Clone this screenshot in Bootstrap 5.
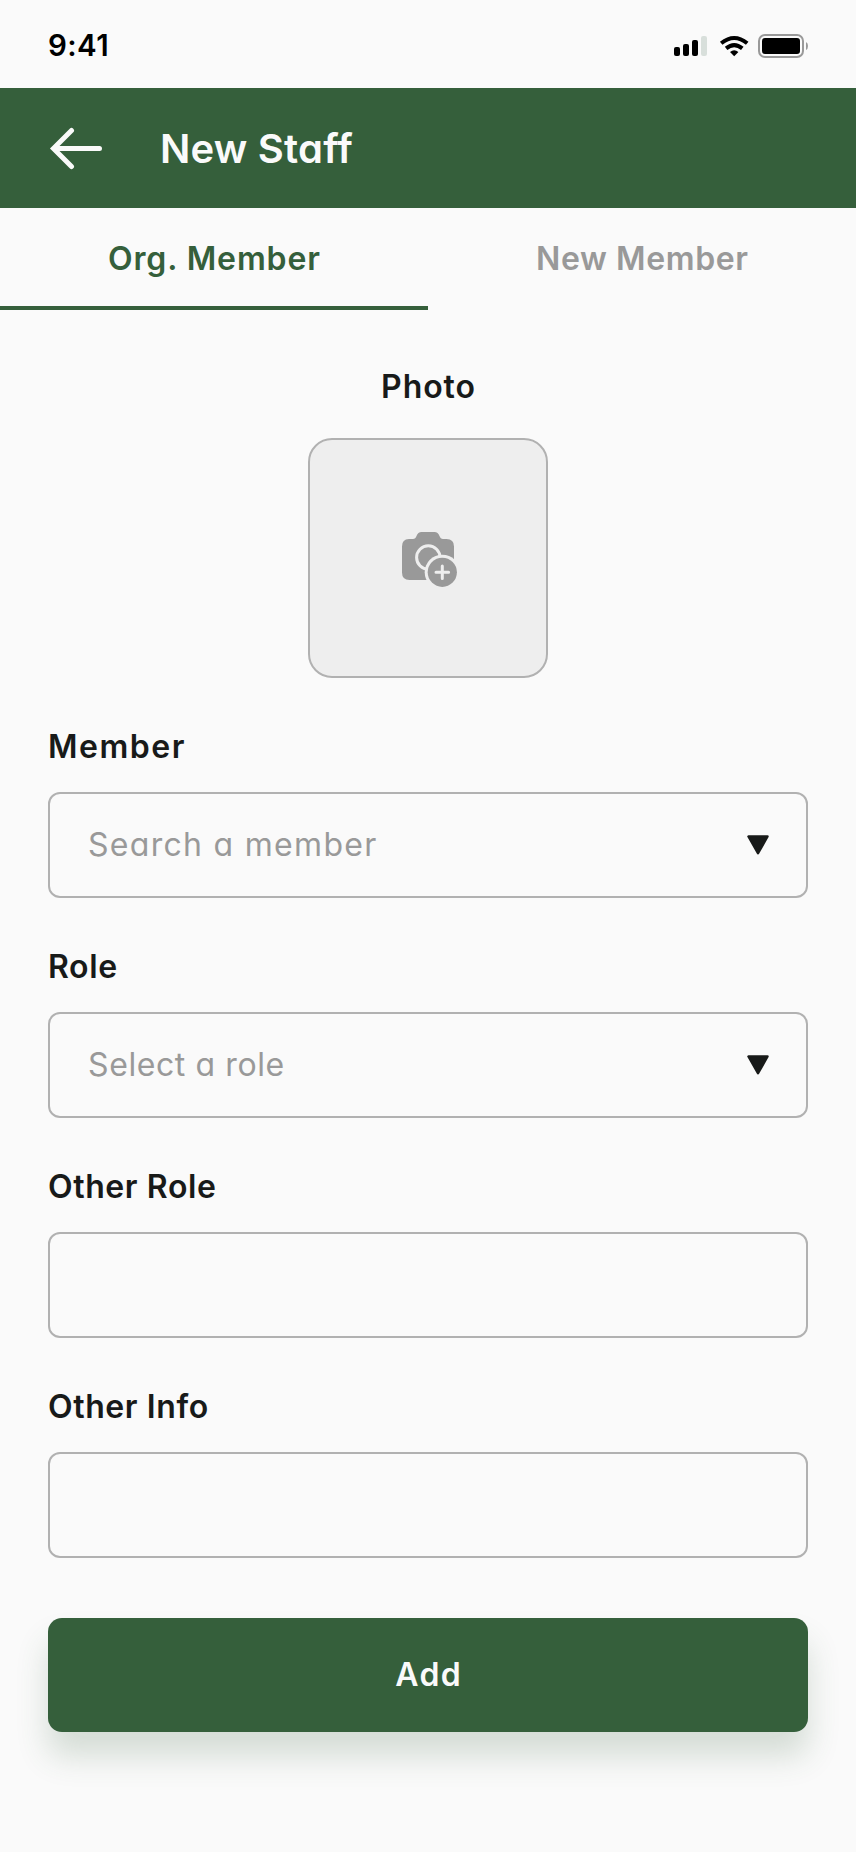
<!DOCTYPE html>
<html lang="en">
<head>
<meta charset="utf-8">
<meta name="viewport" content="width=device-width, initial-scale=1">
<title>New Staff</title>
<link href="https://cdn.jsdelivr.net/npm/bootstrap@5.3.0/dist/css/bootstrap.min.css" rel="stylesheet">
<style>
:root{--green:#355f3b;--paper:#fafafa;--ink:#181a19;--muted:#999;--line:#b1b1b1}
body{background:var(--paper);color:var(--ink);font-family:Inter,"Liberation Sans",sans-serif;font-size:32px;line-height:48px;font-feature-settings:"cv11","calt" 0;min-height:1852px}
svg{display:block;flex:none}
/* tracking steps; the negative margin keeps centred text centred */
.track-sm{letter-spacing:.6px;margin-right:-.6px}
.track-md{letter-spacing:.9px;margin-right:-.9px}
.track-lg{letter-spacing:1.3px;margin-right:-1.3px}
.track-xl{letter-spacing:1.5px;margin-right:-1.5px}
.status-bar{height:88px;padding:2px 48px 0;color:#000}
.status-bar svg{margin-top:2px}
.clock{font-size:29.5px;font-weight:600;letter-spacing:.4px}
.app-bar{height:120px;padding:2px 48px 0;background:var(--green);color:var(--paper)}
.app-title{font-size:40px;font-weight:600;letter-spacing:.2px;margin-left:55px}
.tab-link{border:0;border-bottom:4px solid transparent;border-radius:0;padding:27px 0 23px;color:var(--muted);font-weight:600;background:none}
.tab-link.active{color:var(--green);border-color:var(--green)}
.staff-form{padding:53px 48px 0}
.field{margin-bottom:45px}
.field-label{display:block;font-weight:600;margin-bottom:21px}
.photo-field .field-label{margin-bottom:27px}
.photo-box{width:240px;height:240px;border:2px solid var(--line);border-radius:24px;background:#eee}
.photo-box svg{overflow:visible}
.field-box{height:106px;border:2px solid var(--line);border-radius:12px;padding:0 37.5px 0 38px;color:var(--muted);background:transparent}
.btn-add{height:114px;margin-top:60px;border:0;border-radius:14px;background:var(--green);color:var(--paper);font-size:32px;font-weight:600;box-shadow:0 24px 32px rgba(53,95,59,.19)}
</style>
</head>
<body>
<div class="status-bar d-flex align-items-center justify-content-between">
  <span class="clock">9:41</span>
  <svg width="134" height="24" viewBox="0 0 134 24">
    <rect x="0" y="13" width="6" height="9" rx="2"/><rect x="9" y="10" width="6" height="12" rx="2"/><rect x="18" y="6" width="6" height="16" rx="2"/><rect x="27" y="2" width="6" height="20" rx="2" fill="#d8dfdb"/>
    <g fill="none" stroke="#000" stroke-width="4"><path d="M47.2 9.300Q60.200-1.300 73.200 9.300"/><path d="M52.100 14.400Q60.200 7.800 68.300 14.400"/></g>
    <path d="M56 18Q60.200 14.600 64.400 18L60.200 22.200Z"/>
    <rect x="85" y="1" width="44" height="22" rx="6" fill="none" stroke="#999" stroke-width="2"/><rect x="88" y="4" width="38" height="16" rx="3"/><path d="M132 8q2 1 2 4t-2 4z" fill="#999"/>
  </svg>
</div>
<header class="app-bar d-flex align-items-center">
  <svg width="57" height="44" viewBox="0 0 57 44" fill="none" stroke="#fafafa" stroke-width="5" stroke-linecap="round"><path d="M23.500 3.500L5.500 21.500l18 18M6 21.500h45.500"/></svg>
  <h1 class="app-title mb-0">New Staff</h1>
</header>
<nav class="nav nav-fill row g-0">
  <a class="tab-link active col-6 text-center text-decoration-none" href="#"><span class="track-md">Org. Member</span></a>
  <a class="tab-link col-6 text-center text-decoration-none" href="#"><span class="track-sm">New Member</span></a>
</nav>
<main class="staff-form">
  <div class="field photo-field d-flex flex-column align-items-center">
    <span class="field-label"><span class="track-md">Photo</span></span>
    <div class="photo-box d-flex align-items-center justify-content-center">
      <svg width="56" height="56" viewBox="400 530 56 56">
        <path fill="#999" d="M409 539h4q2.500 0 3.500-3q1.500-4 5-4h13q3.500 0 5 4q1 3 3.500 3h3.500q7.500 0 7.500 7.500V580H409.500q-7.500 0-7.500-7.500V546.500q0-7.500 7-7.500z"/>
        <circle cx="428.300" cy="557.500" r="11.700" fill="none" stroke="#eee" stroke-width="3"/>
        <path fill="#eee" d="M442 572h14v14h-14z"/><circle cx="442.300" cy="572.300" r="17.600" fill="#eee"/><circle cx="442.300" cy="572.300" r="14.600" fill="#999"/>
        <path d="M436 572.300h12.600M442.300 566v12.600" stroke="#eee" stroke-width="3" stroke-linecap="round"/>
      </svg>
    </div>
  </div>
  <div class="field">
    <span class="field-label"><span class="track-xl">Member</span></span>
    <div class="field-box d-flex align-items-center justify-content-between"><span class="track-lg">Search a member</span>
      <svg width="22" height="20" viewBox="0 0 22 20"><path d="M1.500 1.500h19L11 18.200z" fill="#181a19" stroke="#181a19" stroke-width="2.500" stroke-linejoin="round"/></svg></div>
  </div>
  <div class="field">
    <span class="field-label"><span class="track-sm">Role</span></span>
    <div class="field-box d-flex align-items-center justify-content-between"><span class="track-sm">Select a role</span>
      <svg width="22" height="20" viewBox="0 0 22 20"><path d="M1.500 1.500h19L11 18.200z" fill="#181a19" stroke="#181a19" stroke-width="2.500" stroke-linejoin="round"/></svg></div>
  </div>
  <div class="field"><span class="field-label"><span class="track-sm">Other Role</span></span><div class="field-box"></div></div>
  <div class="field mb-0"><span class="field-label"><span class="track-sm">Other Info</span></span><div class="field-box"></div></div>
  <button class="btn btn-add w-100" type="button"><span class="track-lg">Add</span></button>
</main>
<script src="https://cdn.jsdelivr.net/npm/bootstrap@5.3.0/dist/js/bootstrap.bundle.min.js"></script>
</body>
</html>
